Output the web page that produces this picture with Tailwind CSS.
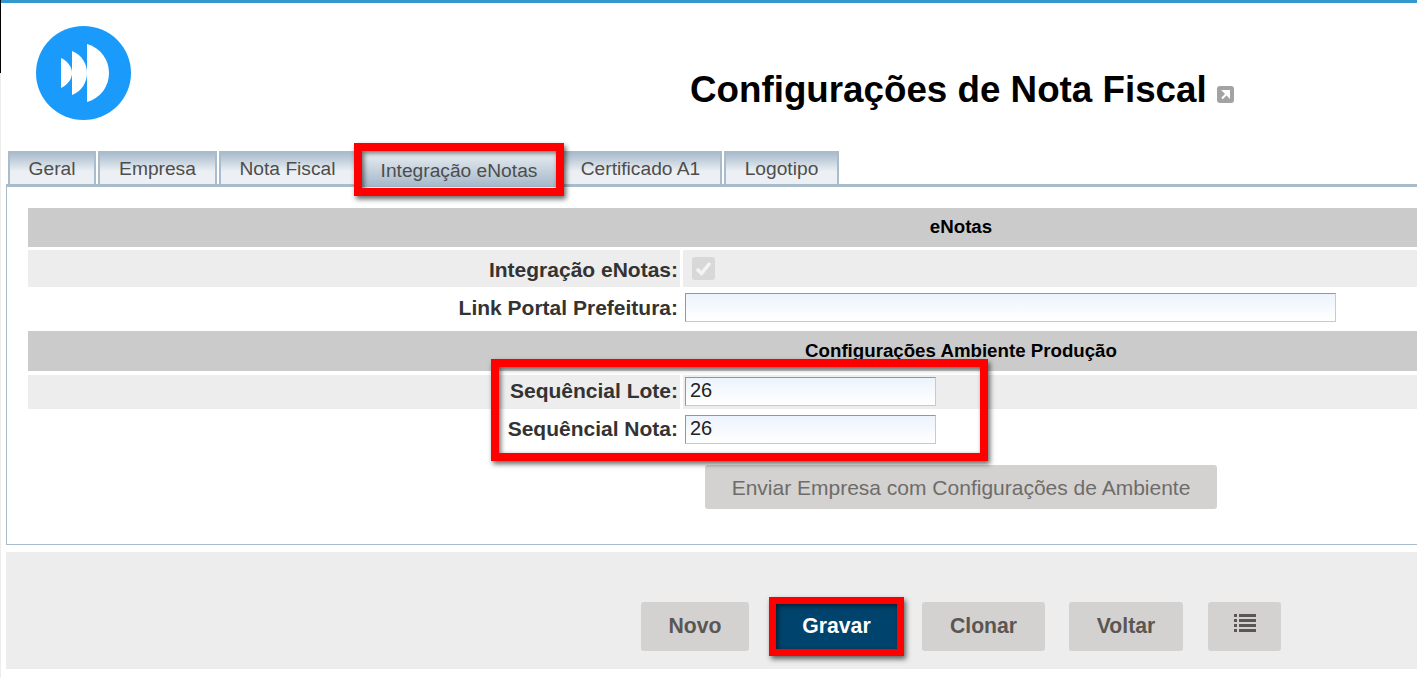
<!DOCTYPE html>
<html lang="en">
<head>
  <meta charset="UTF-8" />
  <title>Configurações de Nota Fiscal</title>
  <script src="https://cdn.jsdelivr.net/npm/@tailwindcss/browser@4"></script>
</head>
<body class="bg-white h-[678px] w-[1417px] overflow-hidden relative font-['Liberation_Sans',Arial,sans-serif] text-[#333]">

  <!-- left edge of the window behind -->
  <div class="absolute left-0 top-0 w-px h-[73px] bg-black"></div>
  <div class="absolute left-0 top-[73px] w-px h-[605px] bg-[#ededed]"></div>

  <div class="h-[3px] bg-[#3399cc]"></div>

  <!-- header -->
  <div class="h-[148px] flex">
    <div class="w-[690px] shrink-0 pl-[36px] pt-[23px]">
      <svg width="95" height="94" viewBox="0 0 95 94">
        <ellipse cx="47.5" cy="47" rx="47.5" ry="47" fill="#1a9bfc" />
        <path d="M25 32 C33 36 36 42 36 47 C36 52 33 58 25 62 Z" fill="#fff" />
        <path d="M36 25 C46 29 51 38 51 47 C51 56 46 65 36 69 Z" fill="#fff" />
        <path d="M51 18 C65 22 73 34 73 47 C73 60 65 72 51 76 Z" fill="#fff" />
      </svg>
    </div>
    <div class="pt-[65px] flex items-start gap-[10px]">
      <h1 class="text-[36.75px] leading-[44px] font-bold text-black">Configurações de Nota Fiscal</h1>
      <span class="mt-[18px] w-[17px] h-[17px] rounded-[3px] bg-[#a3a3a3] flex items-center justify-center">
        <svg width="11" height="11" viewBox="0 0 11 11"><path d="M2 9.5 L7 4.5 M3.5 2 H9 V7.5 Z" stroke="#fff" stroke-width="2" fill="#fff" /></svg>
      </span>
    </div>
  </div>

  <!-- tabs -->
  <div class="flex items-end gap-[2px] pl-[8px] h-[33px] text-[19.2px] text-[#4d4d4d]">
    <a class="h-[33px] w-[88px] border-2 border-b-0 border-[#a9bccc] bg-gradient-to-b from-[#a9bccc] to-[#ecf0f4] to-60% flex items-center justify-center pt-[1px]">Geral</a>
    <a class="h-[33px] w-[119px] border-2 border-b-0 border-[#a9bccc] bg-gradient-to-b from-[#a9bccc] to-[#ecf0f4] to-60% flex items-center justify-center pt-[1px]">Empresa</a>
    <a class="h-[33px] w-[137px] border-2 border-b-0 border-[#a9bccc] bg-gradient-to-b from-[#a9bccc] to-[#ecf0f4] to-60% flex items-center justify-center pt-[1px]">Nota Fiscal</a>
    <a class="h-[33px] w-[199px] bg-gradient-to-b from-[#ecf0f4] to-[#a9bccc] flex items-center justify-center pt-[7px] pl-[3px]">Integração eNotas</a>
    <a class="h-[33px] w-[163px] border-2 border-b-0 border-[#a9bccc] bg-gradient-to-b from-[#a9bccc] to-[#ecf0f4] to-60% flex items-center justify-center pt-[1px]">Certificado A1</a>
    <a class="h-[33px] w-[115px] border-2 border-b-0 border-[#a9bccc] bg-gradient-to-b from-[#a9bccc] to-[#ecf0f4] to-60% flex items-center justify-center pt-[1px]">Logotipo</a>
  </div>

  <!-- panel -->
  <div class="ml-[6px] h-[361px] border border-t-[3px] border-r-0 border-[#a9bccc] pt-[21px] pl-[21px]">
    <div class="h-[39px] bg-[#cbcbcb] flex items-center justify-center text-[18.7px] font-bold text-black">
      <span class="pl-[477px] whitespace-nowrap">eNotas</span>
    </div>

    <div class="mt-[3px] h-[37px] flex gap-[3px]">
      <div class="w-[652px] bg-[#ededed] flex items-center justify-end pr-[2px] text-[21px] font-bold pt-[2px]">Integração eNotas:</div>
      <div class="flex-1 bg-[#ededed] flex items-center pl-[9px]">
        <span class="w-[23px] h-[23px] rounded-[3px] bg-[#d8d8d8] flex items-center justify-center">
          <svg width="17" height="15" viewBox="0 0 17 15"><path d="M2 8 L6.5 12.5 L15 2" fill="none" stroke="#f4f4f4" stroke-width="3.5" /></svg>
        </span>
      </div>
    </div>

    <div class="mt-[3px] h-[38px] flex gap-[3px]">
      <div class="w-[652px] flex items-center justify-end pr-[2px] pb-[2px] text-[21px] font-bold">Link Portal Prefeitura:</div>
      <div class="flex-1 flex items-center pl-[2px]">
        <div class="w-[651px] h-[29px] -mt-[4px] border border-[#8b97ab] border-r-[#b7cdec] border-b-[#b7cdec] bg-gradient-to-b from-[#edf3fc] to-white"></div>
      </div>
    </div>

    <div class="mt-[3px] h-[40px] bg-[#cbcbcb] flex items-center justify-center text-[18.7px] font-bold text-black">
      <span class="pl-[477px] whitespace-nowrap">Configurações Ambiente Produção</span>
    </div>

    <div class="mt-[4px] h-[34px] flex gap-[3px]">
      <div class="w-[652px] bg-[#ededed] flex items-center justify-end pr-[2px] pb-[2px] text-[21px] font-bold">Sequêncial Lote:</div>
      <div class="flex-1 bg-[#ededed] flex items-center">
        <div class="ml-[2px] w-[251px] h-[29px] -mt-[1px] border border-[#8b97ab] border-r-[#b7cdec] border-b-[#b7cdec] bg-gradient-to-b from-[#edf3fc] to-white pl-[4px] text-[20px] leading-[25px] text-[#222]">26</div>
      </div>
    </div>

    <div class="mt-[4px] h-[34px] flex gap-[3px]">
      <div class="w-[652px] flex items-center justify-end pr-[2px] pb-[2px] text-[21px] font-bold">Sequêncial Nota:</div>
      <div class="flex-1 flex items-center">
        <div class="ml-[2px] w-[251px] h-[29px] -mt-[1px] border border-[#8b97ab] border-r-[#b7cdec] border-b-[#b7cdec] bg-gradient-to-b from-[#edf3fc] to-white pl-[4px] text-[20px] leading-[25px] text-[#222]">26</div>
      </div>
    </div>

    <button class="mt-[18px] ml-[677px] w-[512px] h-[44px] pt-[2px] rounded-[3px] bg-[#d3d2d0] text-[21px] text-[#6e6c6a]">Enviar Empresa com Configurações de Ambiente</button>
  </div>

  <!-- footer -->
  <div class="ml-[6px] mt-[7px] h-[117px] bg-[#ededed] flex items-start pl-[635px] pt-[50px] text-[21.2px] font-bold text-[#5a5654]">
    <button class="w-[108px] h-[49px] pb-[1px] rounded-[3px] bg-[#d3d2d0]">Novo</button>
    <button class="ml-[27px] w-[121px] h-[49px] pb-[1px] bg-[#00446e] text-white">Gravar</button>
    <button class="ml-[25px] w-[123px] h-[49px] pb-[1px] rounded-[3px] bg-[#d3d2d0]">Clonar</button>
    <button class="ml-[24px] w-[114px] h-[49px] pb-[1px] rounded-[3px] bg-[#d3d2d0]">Voltar</button>
    <button class="ml-[25px] w-[73px] h-[49px] rounded-[3px] bg-[#d3d2d0] flex justify-center pt-[12px]">
      <svg width="22" height="18" viewBox="0 0 22 18" fill="#5a5654">
        <path d="M0 0h3v3H0zM5 0h17v3H5zM0 5h3v3H0zM5 5h17v3H5zM0 10h3v3H0zM5 10h17v3H5zM0 15h3v3H0zM5 15h17v3H5z" />
      </svg>
    </button>
  </div>

  <!-- red annotation boxes drawn over the screenshot -->
  <div class="absolute left-[354px] top-[143px] w-[210px] h-[53px] border-[8px] border-[#ff0000] shadow-[2px_3px_5px_rgba(0,0,0,0.6),inset_2px_2px_5px_rgba(0,0,0,0.55)]"></div>
  <div class="absolute left-[491px] top-[359px] w-[497px] h-[102px] border-[8px] border-[#ff0000] shadow-[2px_3px_5px_rgba(0,0,0,0.6),inset_2px_2px_5px_rgba(0,0,0,0.55)]"></div>
  <div class="absolute left-[769px] top-[597px] w-[135px] h-[59px] border-[7px] border-[#ff0000] shadow-[2px_3px_5px_rgba(0,0,0,0.6),inset_2px_2px_5px_rgba(0,0,0,0.55)]"></div>

</body>
</html>
